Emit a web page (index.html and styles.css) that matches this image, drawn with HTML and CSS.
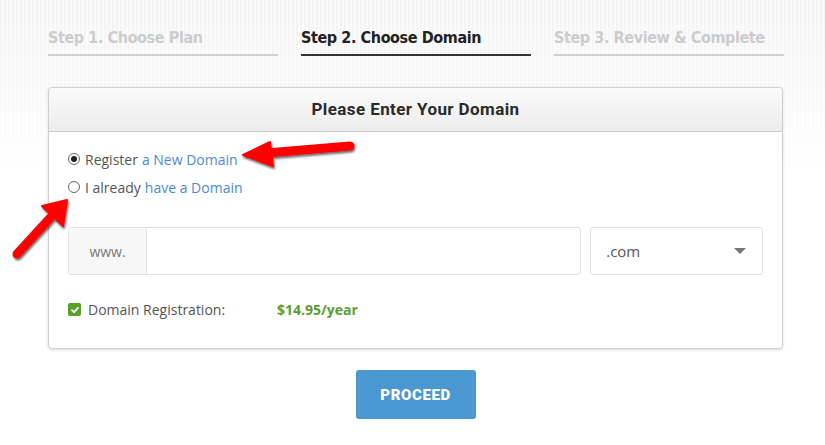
FILE: index.html
```html
<!DOCTYPE html>
<html lang="en">
<head>
    <meta charset="UTF-8">
    <title>Choose Domain</title>
    <link rel="stylesheet" href="styles.css">
</head>
<body>
    <div class="page">
        <div class="steps">
            <div class="step">Step 1. Choose Plan</div>
            <div class="step active">Step 2. Choose Domain</div>
            <div class="step">Step 3. Review &amp; Complete</div>
        </div>

        <div class="card">
            <div class="card-head">Please Enter Your Domain</div>
            <div class="card-body">
                <label class="radio-row">
                    <span class="radio checked"></span>
                    Register <span class="link">a New Domain</span>
                </label>
                <label class="radio-row">
                    <span class="radio"></span>
                    I already <span class="link">have a Domain</span>
                </label>

                <div class="domain-row">
                    <div class="input-group">
                        <div class="addon">www.</div>
                        <div class="field"></div>
                    </div>
                    <div class="select">
                        <span>.com</span>
                        <span class="caret"></span>
                    </div>
                </div>

                <div class="check-row">
                    <span class="checkbox">
                        <svg width="12" height="12" viewBox="0 0 12 12"><path d="M3 6.2 5.1 8.2 9 3.9" fill="none" stroke="#fff" stroke-width="1.8" stroke-linecap="round" stroke-linejoin="round"/></svg>
                    </span>
                    <span class="check-label">Domain Registration:</span>
                    <span class="price">$14.95/year</span>
                </div>
            </div>
        </div>

        <div class="actions">
            <button class="proceed">PROCEED</button>
        </div>

        <!-- annotation arrows -->
        <svg class="arrow arrow-one" width="130" height="40" viewBox="0 0 130 40">
            <defs>
                <filter id="sh1" x="-20%" y="-40%" width="140%" height="180%">
                    <feDropShadow dx="1" dy="2" stdDeviation="1.2" flood-color="#000" flood-opacity="0.6"/>
                </filter>
            </defs>
            <g filter="url(#sh1)">
                <line x1="27" y1="15" x2="110" y2="8" stroke="#f00" stroke-width="9" stroke-linecap="round"/>
                <polygon points="3,17 30,4 33,28" fill="#f00" stroke="#f00" stroke-width="2" stroke-linejoin="round"/>
            </g>
        </svg>
        <svg class="arrow arrow-two" width="70" height="75" viewBox="0 0 70 75">
            <defs>
                <filter id="sh2" x="-40%" y="-40%" width="180%" height="180%">
                    <feDropShadow dx="1" dy="2" stdDeviation="1.2" flood-color="#000" flood-opacity="0.6"/>
                </filter>
            </defs>
            <g filter="url(#sh2)">
                <line x1="9" y1="62" x2="42" y2="26" stroke="#f00" stroke-width="9" stroke-linecap="round"/>
                <polygon points="59,8 34,14 55,34" fill="#f00" stroke="#f00" stroke-width="2" stroke-linejoin="round"/>
            </g>
        </svg>
    </div>
</body>
</html>
```

FILE: styles.css
```css
body {
    margin: 0;
    font-family: 'Open Sans', Arial, sans-serif;
    color: #555;
    background: #fff;
}
.page {
    position: relative;
    height: 445px;
    padding: 28px 0 0 48px;
    box-sizing: border-box;
    background:
        linear-gradient(to bottom, rgba(255,255,255,0) 0, rgba(255,255,255,0.3) 60px, #fff 170px),
        repeating-linear-gradient(to right, #f3f3f3 0, #f3f3f3 2px, #fafafa 2px, #fafafa 4px);
    background-size: 100% 170px;
    background-repeat: no-repeat;
}
.steps {
    display: flex;
    gap: 23px;
    width: 736px;
}
.step {
    width: 230px;
    font-family: 'DejaVu Sans Condensed', 'DejaVu Sans', sans-serif;
    font-weight: bold;
    font-size: 16px;
    letter-spacing: -0.4px;
    color: #ccc;
    padding-bottom: 7px;
    border-bottom: 2px solid #d0d0d0;
}
.step.active {
    color: #222;
    border-bottom-color: #333;
}
.card {
    margin-top: 31px;
    width: 735px;
    border: 1px solid #cfcfcf;
    border-radius: 4px;
    background: #fff;
    box-shadow: 0 1px 3px rgba(0,0,0,0.15);
    box-sizing: border-box;
}
.card-head {
    height: 43px;
    line-height: 43px;
    text-align: center;
    font-family: Roboto, 'Open Sans', sans-serif;
    font-weight: bold;
    font-size: 17px;
    letter-spacing: 0.4px;
    color: #2a2a2a;
    background: linear-gradient(to bottom, #fbfbfb, #ececec);
    border-bottom: 1px solid #c8c8c8;
    border-radius: 4px 4px 0 0;
}
.card-body {
    padding: 13px 19px 29px 19px;
}
.radio-row {
    display: flex;
    align-items: center;
    gap: 5px;
    font-size: 14px;
    height: 28px;
}
.radio-row .link {
    color: #4a8bd0;
    margin-left: -1px;
}
.radio {
    width: 12px;
    height: 12px;
    border: 1px solid #666;
    border-radius: 50%;
    box-sizing: border-box;
    display: flex;
    align-items: center;
    justify-content: center;
}
.radio.checked::after {
    content: "";
    width: 6px;
    height: 6px;
    border-radius: 50%;
    background: #222;
}
.domain-row {
    display: flex;
    gap: 9px;
    margin-top: 26px;
}
.input-group {
    display: flex;
    width: 514px;
    height: 48px;
    border: 1px solid #e0e0e0;
    border-radius: 3px;
    box-sizing: border-box;
}
.addon {
    width: 77px;
    background: #f7f7f7;
    border-right: 1px solid #e0e0e0;
    display: flex;
    align-items: center;
    justify-content: center;
    font-size: 14px;
    color: #777;
}
.field {
    flex: 1;
}
.select {
    width: 173px;
    height: 48px;
    border: 1px solid #e0e0e0;
    border-radius: 3px;
    box-sizing: border-box;
    display: flex;
    align-items: center;
    justify-content: space-between;
    padding: 0 16px 0 15px;
    font-size: 15px;
    color: #555;
}
.caret {
    width: 0;
    height: 0;
    border-left: 6px solid transparent;
    border-right: 6px solid transparent;
    border-top: 6px solid #777;
}
.check-row {
    display: flex;
    align-items: center;
    margin-top: 25px;
    font-size: 14px;
}
.checkbox {
    width: 13px;
    height: 13px;
    background: #5aa02c;
    border-radius: 2px;
    display: flex;
    align-items: center;
    justify-content: center;
}
.check-label {
    margin-left: 7px;
    width: 189px;
}
.price {
    color: #5a9e32;
    font-weight: bold;
}
.actions {
    width: 735px;
    display: flex;
    justify-content: center;
    margin-top: 21px;
}
.proceed {
    width: 120px;
    height: 49px;
    border: none;
    border-radius: 3px;
    background: #4a98d2;
    color: #fff;
    font-family: Roboto, 'Open Sans', sans-serif;
    font-weight: 900;
    font-size: 15px;
    letter-spacing: 0.6px;
}
.arrow {
    position: absolute;
}
.arrow-one {
    left: 240px;
    top: 138px;
}
.arrow-two {
    left: 8px;
    top: 192px;
}
```
